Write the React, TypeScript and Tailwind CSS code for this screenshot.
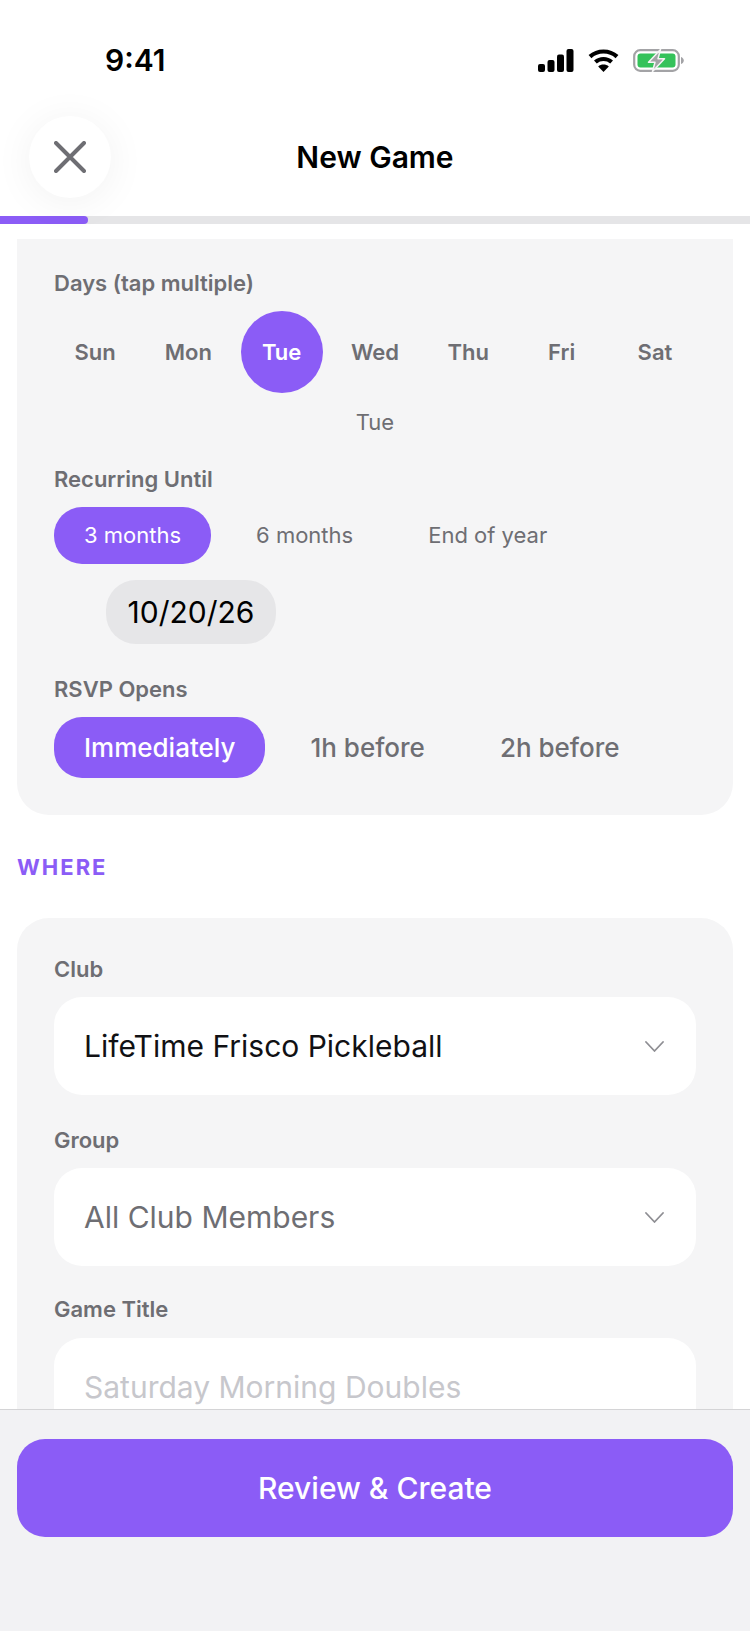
import React from "react";

const font = { fontFamily: "Inter, 'Noto Sans', sans-serif" };

function Signal() {
  return (
    <svg width="36" height="23" viewBox="0 0 36 23" fill="#000">
      <rect x="0" y="15" width="7" height="8" rx="2" />
      <rect x="9.5" y="11" width="7" height="12" rx="2" />
      <rect x="19" y="5.5" width="7" height="17.5" rx="2" />
      <rect x="28.5" y="0" width="7" height="23" rx="2" />
    </svg>
  );
}

function Wifi() {
  return (
    <svg width="31" height="23" viewBox="0 0 31 23" fill="none" stroke="#000" strokeWidth="4.2">
      <path d="M2 7.6C9.5 0.8 21.5 0.8 29 7.6" />
      <path d="M7.4 13C12 9 19 9 23.6 13" />
      <path d="M15.5 23L10.2 17.4C13.2 14.9 17.8 14.9 20.8 17.4Z" fill="#000" stroke="none" />
    </svg>
  );
}

function Battery() {
  return (
    <svg width="51" height="23" viewBox="0 0 51 23" fill="none">
      <rect x="1.2" y="1.2" width="44.6" height="20.6" rx="6" stroke="#a3a3a6" strokeWidth="2.2" />
      <rect x="4.5" y="4.5" width="38" height="14" rx="3" fill="#34c25a" />
      <path d="M48 8v7c1.7-.5 2.8-2 2.8-3.5S49.700 8.500 48 8Z" fill="#a3a3a6" />
      <path d="M27.500 0.500L15.500 13.200H22L19.500 22.500L31.500 9.800H25Z" fill="#a3a3a6" stroke="#f4f4f4" strokeWidth="1.500" strokeLinejoin="round" />
    </svg>
  );
}

function Chevron() {
  return (
    <svg width="19" height="11" viewBox="0 0 19 11" fill="none" stroke="#8e8e93" strokeWidth="1.800" strokeLinecap="round" strokeLinejoin="round">
      <path d="M1 1L9.500 10L18 1" />
    </svg>
  );
}

function Label({ children, className = "" }: { children: React.ReactNode; className?: string }) {
  return <div className={"text-[22px] leading-[28px] font-semibold text-[#6e6e73] " + className}>{children}</div>;
}

function Select({ text, muted }: { text: string; muted?: boolean }) {
  return (
    <div className="mt-[14px] flex h-[98px] items-center justify-between rounded-[28px] bg-white pl-[30px] pr-[32px]">
      <span className={"text-[30px] " + (muted ? "text-[#6e6e73]" : "text-[#111114]")}>{text}</span>
      <Chevron />
    </div>
  );
}

export default function App() {
  const days = ["Sun", "Mon", "Tue", "Wed", "Thu", "Fri", "Sat"];
  return (
    <div style={font} className="flex h-[1631px] w-[750px] flex-col overflow-hidden bg-white">
      <div className="flex h-[117px] items-start justify-between pl-[105px] pr-[66px] pt-[42px]">
        <span className="text-[30px] leading-[36px] font-semibold text-black">9:41</span>
        <div className="mt-[7px] flex items-center">
          <Signal />
          <div className="ml-[14px]"><Wifi /></div>
          <div className="ml-[14px]"><Battery /></div>
        </div>
      </div>

      <div className="relative flex h-[80px] items-center justify-center">
        <button className="absolute left-[29px] top-[-1px] flex h-[82px] w-[82px] items-center justify-center rounded-full bg-white shadow-[0_4px_40px_rgba(0,0,0,0.06)]">
          <svg width="32" height="32" viewBox="0 0 32 32" fill="none" stroke="#6e6e73" strokeWidth="4" strokeLinecap="round">
            <path d="M2 2L30 30M30 2L2 30" />
          </svg>
        </button>
        <span className="text-[30px] font-semibold text-black">New Game</span>
      </div>

      <div className="mt-[19px] h-[8px] shrink-0 bg-[#e5e5e7]">
        <div className="h-full w-[88px] rounded-r-full bg-[#8b5cf6]" />
      </div>

      <div className="min-h-0 flex-1 overflow-hidden px-[17px] pt-[15px]">
        <div className="rounded-b-[32px] bg-[#f5f5f6] px-[37px] pb-[37px] pt-[30px]">
          <Label>Days (tap multiple)</Label>
          <div className="mt-[14px] flex justify-between">
            {days.map((d) => (
              <div
                key={d}
                className={
                  "flex h-[82px] w-[82px] items-center justify-center rounded-full text-[22px] font-semibold " +
                  (d === "Tue" ? "bg-[#8b5cf6] text-white" : "text-[#6e6e73]")
                }
              >
                {d}
              </div>
            ))}
          </div>
          <div className="mt-[15px] text-center text-[22px] leading-[28px] text-[#6e6e73]">Tue</div>

          <Label className="mt-[29px]">Recurring Until</Label>
          <div className="mt-[14px] flex gap-[15px] text-[22px]">
            <div className="flex h-[57px] items-center rounded-[28px] bg-[#8b5cf6] px-[30px] text-white">3 months</div>
            <div className="flex h-[57px] items-center px-[30px] text-[#6e6e73]">6 months</div>
            <div className="flex h-[57px] items-center px-[30px] text-[#6e6e73]">End of year</div>
          </div>
          <div className="ml-[52px] mt-[16px] flex h-[64px] w-[170px] items-center justify-center rounded-[30px] bg-[#e6e6e8] text-[30px] text-black">
            10/20/26
          </div>

          <Label className="mt-[31px]">RSVP Opens</Label>
          <div className="mt-[14px] flex gap-[15px] text-[26px] font-medium">
            <div className="flex h-[61px] items-center rounded-[28px] bg-[#8b5cf6] px-[30px] text-white">Immediately</div>
            <div className="flex h-[61px] items-center px-[30px] text-[#6e6e73]">1h before</div>
            <div className="flex h-[61px] items-center px-[30px] text-[#6e6e73]">2h before</div>
          </div>
        </div>

        <div className="mt-[38px] text-[22px] leading-[28px] font-bold tracking-[2px] text-[#8b5cf6]">WHERE</div>

        <div className="mt-[37px] rounded-t-[32px] bg-[#f5f5f6] px-[37px] pb-[37px] pt-[37px]">
          <Label>Club</Label>
          <Select text="LifeTime Frisco Pickleball" />
          <Label className="mt-[31px]">Group</Label>
          <Select text="All Club Members" muted />
          <Label className="mt-[29px]">Game Title</Label>
          <input
            readOnly
            placeholder="Saturday Morning Doubles"
            className="mt-[15px] h-[98px] w-full rounded-[28px] bg-white px-[30px] text-[30px] outline-none placeholder:text-[#c7c7cc]"
          />
        </div>
      </div>

      <div className="h-[222px] shrink-0 border-t border-[#d4d4d6] bg-[#f2f2f4] px-[17px] pt-[29px]">
        <div className="flex h-[98px] items-center justify-center rounded-[28px] bg-[#8b5cf6] text-[30px] font-medium text-white">
          Review &amp; Create
        </div>
      </div>
    </div>
  );
}
